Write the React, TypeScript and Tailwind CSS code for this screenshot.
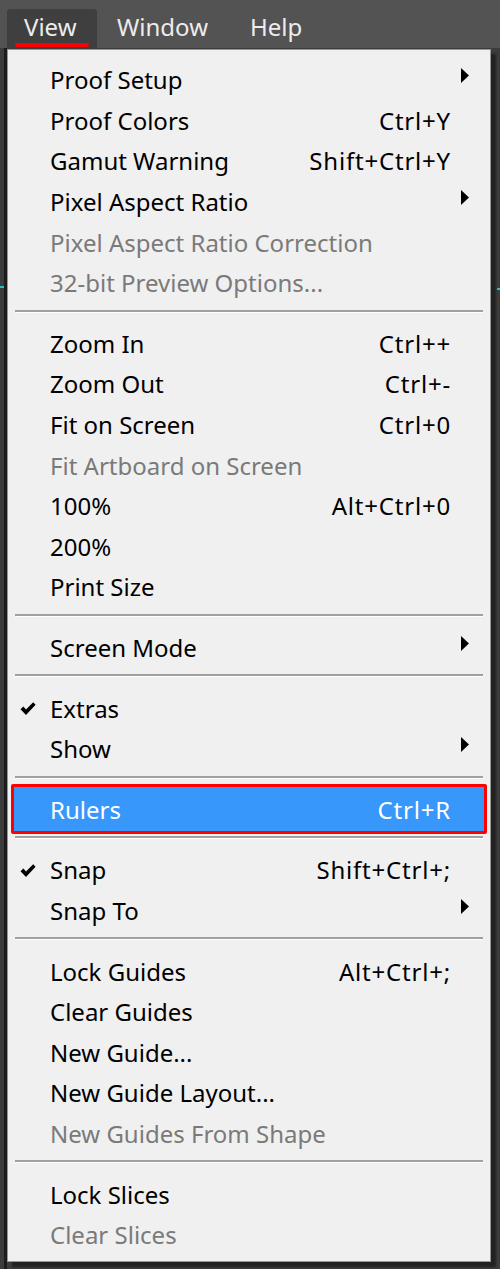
import React from "react";

type Item =
  | { type: "sep" }
  | {
      type: "item";
      label: string;
      shortcut?: string;
      disabled?: boolean;
      sub?: boolean;
      checked?: boolean;
      active?: boolean;
    };

const items: Item[] = [
  { type: "item", label: "Proof Setup", sub: true },
  { type: "item", label: "Proof Colors", shortcut: "Ctrl+Y" },
  { type: "item", label: "Gamut Warning", shortcut: "Shift+Ctrl+Y" },
  { type: "item", label: "Pixel Aspect Ratio", sub: true },
  { type: "item", label: "Pixel Aspect Ratio Correction", disabled: true },
  { type: "item", label: "32-bit Preview Options...", disabled: true },
  { type: "sep" },
  { type: "item", label: "Zoom In", shortcut: "Ctrl++" },
  { type: "item", label: "Zoom Out", shortcut: "Ctrl+-" },
  { type: "item", label: "Fit on Screen", shortcut: "Ctrl+0" },
  { type: "item", label: "Fit Artboard on Screen", disabled: true },
  { type: "item", label: "100%", shortcut: "Alt+Ctrl+0" },
  { type: "item", label: "200%" },
  { type: "item", label: "Print Size" },
  { type: "sep" },
  { type: "item", label: "Screen Mode", sub: true },
  { type: "sep" },
  { type: "item", label: "Extras", checked: true },
  { type: "item", label: "Show", sub: true },
  { type: "sep" },
  { type: "item", label: "Rulers", shortcut: "Ctrl+R", active: true },
  { type: "sep" },
  { type: "item", label: "Snap", shortcut: "Shift+Ctrl+;", checked: true },
  { type: "item", label: "Snap To", sub: true },
  { type: "sep" },
  { type: "item", label: "Lock Guides", shortcut: "Alt+Ctrl+;" },
  { type: "item", label: "Clear Guides" },
  { type: "item", label: "New Guide..." },
  { type: "item", label: "New Guide Layout..." },
  { type: "item", label: "New Guides From Shape", disabled: true },
  { type: "sep" },
  { type: "item", label: "Lock Slices" },
  { type: "item", label: "Clear Slices", disabled: true },
];

function Check() {
  return (
    <svg width="16" height="14" viewBox="0 0 16 14" className="block">
      <path d="M0.5 7.2 L3.4 4.6 L6 7.4 L13.2 0.3 L15.6 2.8 L6 12.9 Z" fill="#000" />
    </svg>
  );
}

function Arrow() {
  return (
    <svg width="8" height="15" viewBox="0 0 8 15" className="block">
      <path d="M0 0 L8 7.5 L0 15 Z" fill="#000" />
    </svg>
  );
}

export default function App() {
  return (
    <div className="relative w-[500px] h-[1269px] overflow-hidden bg-[#3c3c3c] font-['Noto_Sans',sans-serif]">
      {/* top menubar */}
      <div className="h-[48px] bg-[#535353] flex items-end pl-[7px] text-[24px] text-[#ececec]">
        <div className="relative h-[39px] w-[90px] rounded-t-[3px] bg-[#3f3f3f] pl-[17px] leading-[36px]">
          View
          <div className="absolute left-[8px] top-[34px] h-[4px] w-[74px] rounded-full bg-[#ff0000]" />
        </div>
        <div className="h-[39px] pl-[20px] leading-[36px]">Window</div>
        <div className="h-[39px] pl-[42px] leading-[36px]">Help</div>
      </div>

      {/* canvas edges visible beside the menu */}
      <div className="absolute left-[4px] top-[48px] h-[1221px] w-[3px] bg-[#1c1c1c]" />
      <div className="absolute left-0 top-[286px] h-[2px] w-[4px] bg-[#22c3c3]" />
      <div className="absolute right-0 top-[288px] h-[2px] w-[3px] bg-[#22c3c3]" />

      {/* dropdown menu */}
      <div className="absolute left-[7px] top-[49px] w-[484px] h-[1213px] border border-[#979797] bg-[#f0f0f0] shadow-[5px_5px_2px_rgba(0,0,0,0.45)] pt-[10px] text-[24px] text-black flex flex-col">
        {items.map((it, i) => {
          if (it.type === "sep") {
            return (
              <div key={i} className="h-[20px] shrink-0 pt-[6px] px-[7px]">
                <div className="h-[2px] bg-[#a0a0a0]" />
                <div className="h-[1px] bg-white" />
              </div>
            );
          }
          const color = it.active
            ? "text-white"
            : it.disabled
            ? "text-[#7a7a7a]"
            : "text-black";
          return (
            <div key={i} className="relative h-[40.6px] shrink-0">
              {it.active && (
                <div className="absolute left-[3px] right-[3px] top-[-6px] bottom-[-4px] border-[3px] border-[#ff0000] rounded-[2px] bg-[#3797fb]" />
              )}
              <div className={`relative flex h-full items-center ${color}`}>
                <div className="w-[42px] shrink-0 flex pl-[12px] pt-[1px]">
                  {it.checked && <Check />}
                </div>
                <span className="flex-1 whitespace-nowrap leading-none">{it.label}</span>
                {it.shortcut && (
                  <span className="whitespace-nowrap leading-none tracking-[0.8px]">{it.shortcut}</span>
                )}
                <div className="w-[39px] shrink-0 flex pl-[10px] pb-[9px]">
                  {it.sub && <Arrow />}
                </div>
              </div>
            </div>
          );
        })}
      </div>
    </div>
  );
}
